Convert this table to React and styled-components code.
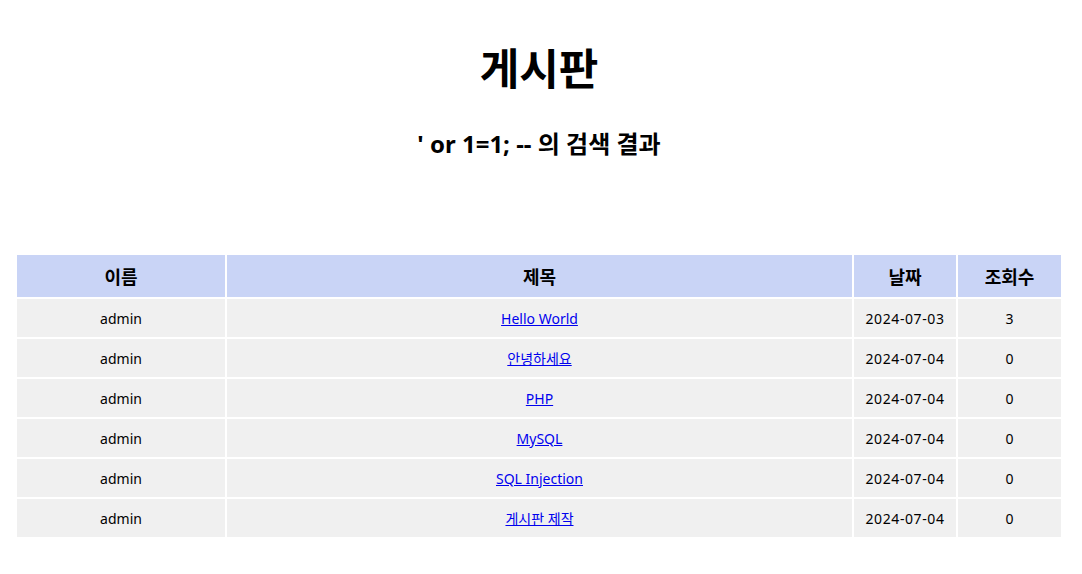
import React from 'react';
import styled, { createGlobalStyle } from 'styled-components';

const GlobalStyle = createGlobalStyle`
  body {
    margin: 0;
    background: #ffffff;
    font-family: "Noto Sans", "Noto Sans CJK KR", sans-serif;
    color: #000;
  }
`;

const Page = styled.div`
  padding: 0 19px 0 15px;
`;

const Title = styled.h1`
  margin: 0;
  padding-top: 40px;
  text-align: center;
  font-size: 43px;
  font-weight: 700;
  line-height: 58px;
`;

const SubTitle = styled.h2`
  margin: 0;
  padding-top: 28px;
  text-align: center;
  font-size: 24px;
  font-weight: 700;
  line-height: 36px;
`;

const Table = styled.table`
  margin-top: 91px;
  width: 100%;
  border-collapse: separate;
  border-spacing: 2px;
  table-layout: fixed;
`;

const HeadCell = styled.th`
  width: ${(props) => props.width}px;
  height: 42px;
  padding: 0;
  background: #c9d4f6;
  font-size: 18px;
  font-weight: 700;
  text-align: center;
`;

const Cell = styled.td`
  height: 38px;
  padding: 0;
  background: #f0f0f0;
  font-size: 14px;
  text-align: center;
`;

const DateCell = styled(Cell)`
  letter-spacing: 0.6px;
`;

const Link = styled.a`
  color: #0000ee;
  text-decoration: underline;
`;

const posts = [
  { name: 'admin', title: 'Hello World', date: '2024-07-03', views: 3 },
  { name: 'admin', title: '안녕하세요', date: '2024-07-04', views: 0 },
  { name: 'admin', title: 'PHP', date: '2024-07-04', views: 0 },
  { name: 'admin', title: 'MySQL', date: '2024-07-04', views: 0 },
  { name: 'admin', title: 'SQL Injection', date: '2024-07-04', views: 0 },
  { name: 'admin', title: '게시판 제작', date: '2024-07-04', views: 0 },
];

function App() {
  return (
    <Page>
      <GlobalStyle />
      <Title>게시판</Title>
      <SubTitle>' or 1=1; -- 의 검색 결과</SubTitle>
      <Table>
        <thead>
          <tr>
            <HeadCell width={208}>이름</HeadCell>
            <HeadCell width={625}>제목</HeadCell>
            <HeadCell width={102}>날짜</HeadCell>
            <HeadCell width={103}>조회수</HeadCell>
          </tr>
        </thead>
        <tbody>
          {posts.map((post, i) => (
            <tr key={i}>
              <Cell>{post.name}</Cell>
              <Cell>
                <Link href="#">{post.title}</Link>
              </Cell>
              <DateCell>{post.date}</DateCell>
              <Cell>{post.views}</Cell>
            </tr>
          ))}
        </tbody>
      </Table>
    </Page>
  );
}

export default App;
